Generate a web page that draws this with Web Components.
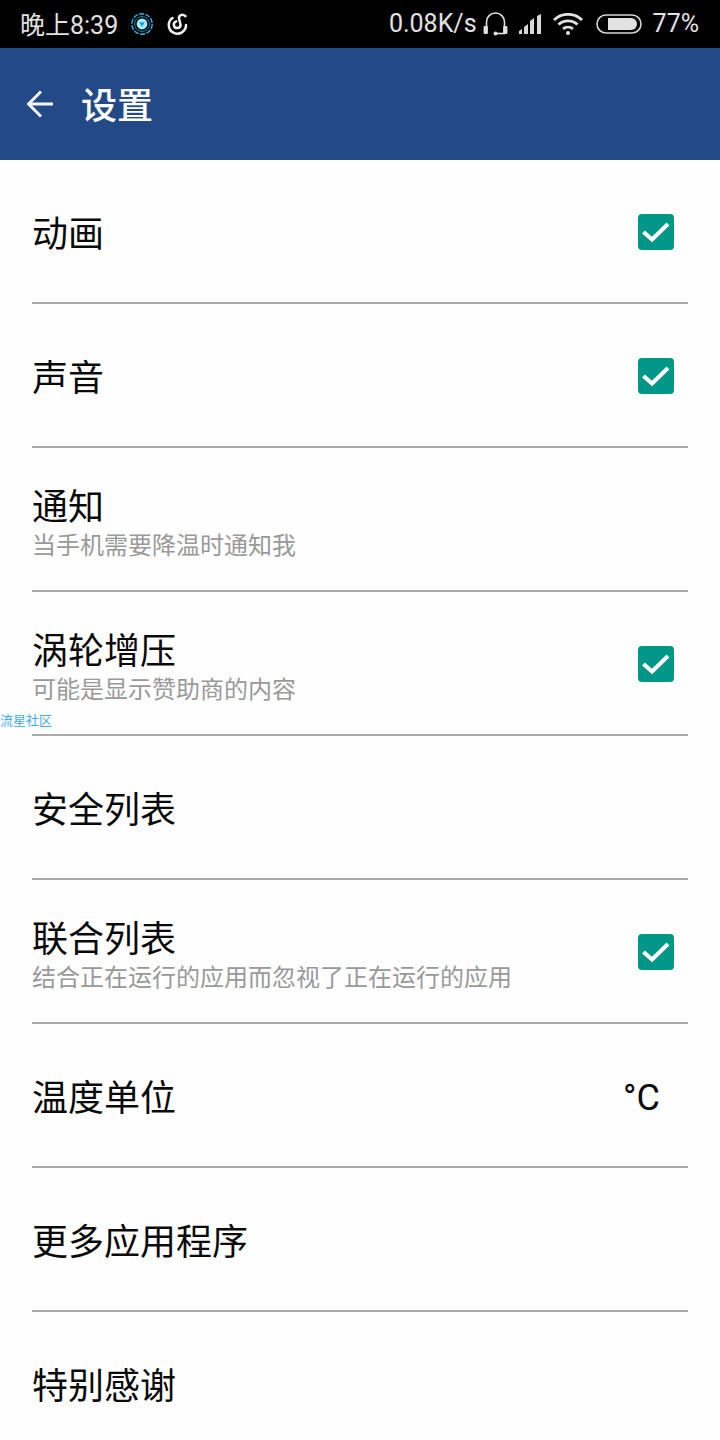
<!DOCTYPE html>
<html lang="zh">
<head>
<meta charset="utf-8">
<title>设置</title>
<style>
    html, body { margin: 0; padding: 0; background: #fefefe; }
    body { width: 720px; height: 1440px; overflow: hidden; position: relative; font-family: Roboto, "Noto Sans CJK SC", sans-serif; }
</style>
</head>
<body>
<status-bar></status-bar>
<app-header>设置</app-header>
<settings-list>
    <settings-row label="动画" checked></settings-row>
    <settings-row label="声音" checked></settings-row>
    <settings-row label="通知" sub="当手机需要降温时通知我"></settings-row>
    <settings-row label="涡轮增压" sub="可能是显示赞助商的内容" checked></settings-row>
    <settings-row label="安全列表"></settings-row>
    <settings-row label="联合列表" sub="结合正在运行的应用而忽视了正在运行的应用" checked></settings-row>
    <settings-row label="温度单位" value="°C"></settings-row>
    <settings-row label="更多应用程序"></settings-row>
    <settings-row label="特别感谢" last></settings-row>
</settings-list>
<water-mark>流星社区</water-mark>

<script>
const statusTemplate = document.createElement('template');
statusTemplate.innerHTML = `
    <style>
        :host {
            display: flex;
            align-items: center;
            height: 48px;
            background: #000;
            color: #e2e2e2;
            font: 25px Roboto, "Noto Sans CJK SC", sans-serif;
            padding: 0 21px 0 20px;
            box-sizing: border-box;
        }
        .left, .right { display: flex; align-items: center; }
        .left { gap: 12px; }
        .right { margin-left: auto; }
        span { margin-top: -2px; }
        svg { display: block; flex: none; }
        .speed { margin-right: 6px; }
        .signal { margin-left: 11px; }
        .wifi { margin-left: 11px; }
        .battery { margin-left: 13px; }
        .level { margin-left: 11px; }
    </style>
    <div class="left">
        <span>晚上8:39</span>
        <svg width="24" height="24" viewBox="0 0 24 24" fill="none">
            <circle cx="12" cy="12" r="10.2" stroke="#22b8e8" stroke-width="1.4" stroke-dasharray="5 1.4"/>
            <circle cx="12" cy="12" r="7.4" stroke="#1688b0" stroke-width="1"/>
            <circle cx="12" cy="12" r="5.4" fill="#a8e8fc"/>
            <path d="M9.2 10.2h5.6l-2.8 4.6z" fill="#1a9fd0"/>
        </svg>
        <svg width="24" height="24" viewBox="0 0 24 24" fill="none" stroke="#f0f0f0" stroke-width="2.5" stroke-linecap="round">
            <path d="M6.5 6A8.6 8.6 0 1 0 20 13"/>
            <path d="M19.5 4.2C16.5 1.6 12.5 3.2 13 6.4L14.6 13A3.4 3.4 0 1 1 10.2 9.4"/>
        </svg>
    </div>
    <div class="right">
        <span class="speed">0.08K/s</span>
        <svg width="25" height="24" viewBox="0 0 25 24" fill="none" stroke="#e2e2e2" stroke-width="1.6">
            <path d="M3.5 15V10a9 9 0 0 1 18 0v5"/>
            <path d="M1 14.5h3.5v7H1zM20.5 14.5H24v7h-3.5z" fill="#e2e2e2" stroke-width="0.8"/>
            <path d="M22 21.5h-9"/>
            <circle cx="12.5" cy="21.5" r="2" fill="#e2e2e2" stroke="none"/>
        </svg>
        <svg class="signal" width="23" height="20" viewBox="0 0 23 20" fill="#d8d8d8">
            <path d="M0 20v-3l3-2v5zM5 20v-7l4-3v10zM11 20V7l4-3v16zM18 20V2l4-2v20z"/>
        </svg>
        <svg class="wifi" width="30" height="22" viewBox="0 0 30 22" fill="none" stroke="#e2e2e2" stroke-width="2.8">
            <path d="M1 7a20 20 0 0 1 28 0"/>
            <path d="M5.5 11.5a14 14 0 0 1 19 0"/>
            <path d="M10 15.8a8 8 0 0 1 10 0"/>
            <circle cx="15" cy="20" r="2" fill="#e2e2e2" stroke="none"/>
        </svg>
        <svg class="battery" width="46" height="20" viewBox="0 0 46 20" fill="none">
            <rect x="1" y="1" width="44" height="18" rx="9" stroke="#d8d8d8" stroke-width="1.6"/>
            <path d="M12 4H35a6 6 0 0 1 0 12H12z" fill="#e2e2e2"/>
        </svg>
        <span class="level">77%</span>
    </div>
`;

class StatusBar extends HTMLElement {
    constructor() {
        super();
        this.attachShadow({ mode: 'open' });
        this.shadowRoot.appendChild(statusTemplate.content.cloneNode(true));
    }
}
window.customElements.define('status-bar', StatusBar);

const headerTemplate = document.createElement('template');
headerTemplate.innerHTML = `
    <style>
        :host {
            display: flex;
            align-items: center;
            height: 112px;
            background: #234a87;
            color: #fff;
            box-sizing: border-box;
            padding: 0 0 0 27px;
            font: 500 36px "Noto Sans CJK SC", sans-serif;
        }
        svg { display: block; flex: none; margin-right: 28px; }
        .title { line-height: 44px; margin-top: -2px; }
    </style>
    <svg width="26" height="28" viewBox="0 0 26 28" fill="none" stroke="#f2f4f8" stroke-width="3">
        <path d="M1.5 14H26"/>
        <path d="M14 1.5L1.5 14L14 26.5"/>
    </svg>
    <span class="title"><slot></slot></span>
`;

class AppHeader extends HTMLElement {
    constructor() {
        super();
        this.attachShadow({ mode: 'open' });
        this.shadowRoot.appendChild(headerTemplate.content.cloneNode(true));
    }
}
window.customElements.define('app-header', AppHeader);

const listTemplate = document.createElement('template');
listTemplate.innerHTML = `
    <style>
        :host { display: flex; flex-direction: column; }
    </style>
    <slot></slot>
`;

class SettingsList extends HTMLElement {
    constructor() {
        super();
        this.attachShadow({ mode: 'open' });
        this.shadowRoot.appendChild(listTemplate.content.cloneNode(true));
    }
}
window.customElements.define('settings-list', SettingsList);

const rowTemplate = document.createElement('template');
rowTemplate.innerHTML = `
    <style>
        :host {
            display: block;
            margin: 0 32px;
            height: 144px;
            box-sizing: border-box;
            border-bottom: 2px solid #aaa;
            font-family: Roboto, "Noto Sans CJK SC", sans-serif;
        }
        :host([last]) { border-bottom: 0; }
        .row {
            display: flex;
            align-items: center;
            justify-content: space-between;
            height: 142px;
        }
        .text { display: flex; flex-direction: column; padding-top: 7px; }
        :host([sub]) .text { padding-top: 9px; }
        .label { font-size: 36px; line-height: 44px; color: #0a0a0a; }
        .sub { font-size: 24px; line-height: 32px; color: #999; }
        .sub:empty { display: none; }
        .side { display: flex; align-items: center; margin: 2px 14px 0 0; }
        .side svg { display: block; }
        .value { font-size: 36px; color: #0a0a0a; margin: 4px 14px 0 0; }
    </style>
    <div class="row">
        <div class="text">
            <span class="label"></span>
            <span class="sub"></span>
        </div>
        <div class="side"></div>
    </div>
`;

class SettingsRow extends HTMLElement {
    constructor() {
        super();
        this.attachShadow({ mode: 'open' });
        this.shadowRoot.appendChild(rowTemplate.content.cloneNode(true));
    }

    connectedCallback() {
        this.shadowRoot.querySelector('.label').textContent = this.getAttribute('label');
        this.shadowRoot.querySelector('.sub').textContent = this.getAttribute('sub') || '';

        const side = this.shadowRoot.querySelector('.side');
        if(this.hasAttribute('checked')) {
            side.innerHTML = `
                <svg width="36" height="36" viewBox="0 0 36 36">
                    <rect width="36" height="36" rx="4" fill="#009688"/>
                    <path d="M5.5 18L14 25.5L30 10" fill="none" stroke="#fff" stroke-width="4"/>
                </svg>`;
        } else if(this.hasAttribute('value')) {
            side.innerHTML = `<span class="value">${this.getAttribute('value')}</span>`;
        }
    }
}
window.customElements.define('settings-row', SettingsRow);

const markTemplate = document.createElement('template');
markTemplate.innerHTML = `
    <style>
        :host {
            position: absolute;
            left: 0;
            top: 712px;
            font: 13px/16px "Noto Sans CJK SC", sans-serif;
            color: #3fabf5;
        }
    </style>
    <slot></slot>
`;

class WaterMark extends HTMLElement {
    constructor() {
        super();
        this.attachShadow({ mode: 'open' });
        this.shadowRoot.appendChild(markTemplate.content.cloneNode(true));
    }
}
window.customElements.define('water-mark', WaterMark);
</script>
</body>
</html>
